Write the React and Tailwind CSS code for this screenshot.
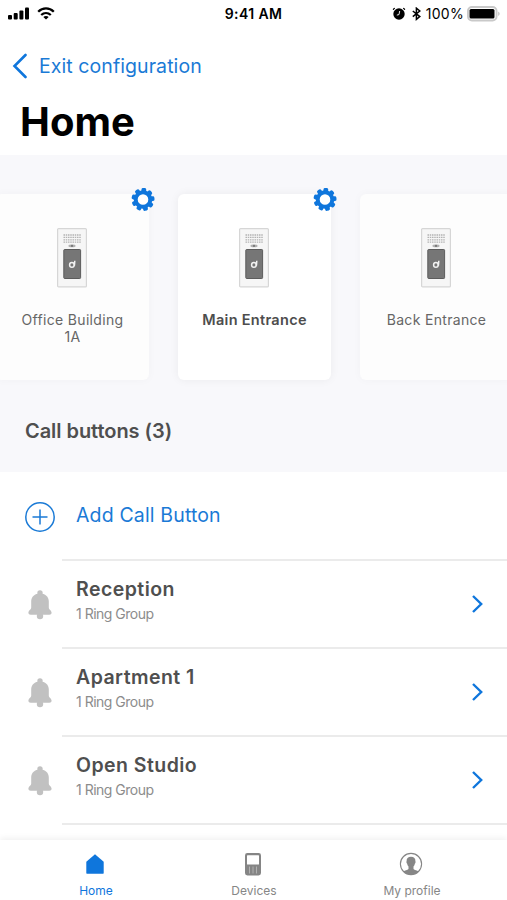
import React, { useState } from "react";

const stations = [
    { name: "Office Building 1A", gear: true },
    { name: "Main Entrance", gear: true, active: true },
    { name: "Back Entrance" },
];

const callButtons = [
    { name: "Reception", info: "1 Ring Group" },
    { name: "Apartment 1", info: "1 Ring Group" },
    { name: "Open Studio", info: "1 Ring Group" },
];

const toothAngles = [0, 40, 80, 120, 160, 200, 240, 280, 320];

const SignalIcon = () => (
    <svg width="22" height="14" viewBox="0 0 22 14">
        <rect x="0" y="8" width="4" height="4.5" rx="1" />
        <rect x="5.7" y="6" width="4" height="6.5" rx="1" />
        <rect x="11.4" y="3.5" width="4" height="9" rx="1" />
        <rect x="17" y="0.5" width="4" height="12" rx="1" />
    </svg>
);

const WifiIcon = () => (
    <svg width="18" height="14" viewBox="0 0 18 14" fill="none" stroke="black" strokeWidth="2.3">
        <path d="M1.2 4.7C5.6 0.3 12.4 0.3 16.8 4.7" />
        <path d="M4.2 8C7 5.4 11 5.4 13.8 8" />
        <path d="M9 12.6L6.3 9.9C7.8 8.6 10.2 8.6 11.7 9.9Z" fill="black" stroke="none" />
    </svg>
);

const AlarmIcon = () => (
    <svg width="14" height="14" viewBox="0 0 14 14" fill="none" stroke="black" strokeLinecap="round">
        <circle cx="7" cy="7" r="5.7" fill="black" stroke="none" />
        <path d="M1.4 2.3L2.4 1.4M12.6 2.3L11.6 1.4" strokeWidth="1.2" />
        <path d="M7.6 4.4L7 7.6L5.2 8" stroke="white" strokeWidth="0.9" />
    </svg>
);

const BluetoothIcon = () => (
    <svg width="9" height="14" viewBox="0 0 9 14" fill="none" stroke="black" strokeWidth="1.5">
        <path d="M0.8 4L7.8 9.6L4.4 12.4V1.2L7.8 4L0.8 9.6" />
    </svg>
);

const BatteryIcon = () => (
    <svg width="34" height="16" viewBox="0 0 34 16">
        <rect x="0.95" y="1" width="28.6" height="13.5" rx="4" fill="white" stroke="#c9c9c9" strokeWidth="1.9" />
        <rect x="2.5" y="3" width="25" height="9.5" rx="1.5" fill="black" />
        <path d="M31.3 5.5C33 6.3 33 9.2 31.3 10Z" fill="#b5b5b5" />
    </svg>
);

const GearIcon = () => (
    <svg width="24" height="24" viewBox="-12 -12.5 24 24">
        {toothAngles.map((angle) => (
            <rect
                key={angle}
                x="-2.4"
                y="-11.5"
                width="4.8"
                height="5"
                rx="1.6"
                fill="#0f76dc"
                transform={`rotate(${angle + 5})`}
            />
        ))}
        <circle r="7.3" fill="white" stroke="#0f76dc" strokeWidth="4" />
    </svg>
);

const DoorStation = () => (
    <svg width="31" height="60" viewBox="0 0 31 60">
        <rect x="0.6" y="0.6" width="28.8" height="58.3" rx="1" fill="#f6f6f6" stroke="#d6d6d6" strokeWidth="1.2" />
        {[7, 9.4, 11.8, 14.2].map((y) => (
            <path key={y} d={`M6.5 ${y}H24`} stroke="#b3b3b3" strokeWidth="1.3" strokeDasharray="1.5 0.75" />
        ))}
        <ellipse cx="15" cy="17.9" rx="3.6" ry="1.3" fill="#b0b0b0" />
        <circle cx="15" cy="17.9" r="1.1" fill="#777777" />
        <rect x="6.8" y="21.5" width="16.8" height="29" rx="0.8" fill="#767676" stroke="#5c5c5c" />
        <circle cx="14.9" cy="36.9" r="2.3" fill="none" stroke="#f2f2f2" strokeWidth="1.5" />
        <path d="M17.8 32.8L17.4 37.8" stroke="#f2f2f2" strokeWidth="1.5" />
    </svg>
);

const BellIcon = () => (
    <svg width="24" height="30" viewBox="0 0 24 30" fill="#c1c1c1">
        <circle cx="12" cy="3" r="2.7" />
        <circle cx="12" cy="26" r="3.2" />
        <path d="M12 3.4C6.8 3.4 3.2 6.7 3.2 11.2V17.5C3.2 19.8 0.4 20.2 0.4 22.8C0.4 24.1 1.3 24.8 2.7 24.8H21.3C22.7 24.8 23.6 24.1 23.6 22.8C23.6 20.2 20.8 19.8 20.8 17.5V11.2C20.8 6.7 17.2 3.4 12 3.4Z" />
    </svg>
);

const HomeIcon = () => (
    <svg width="24" height="24" viewBox="0 0 24 24">
        <path d="M12 2.3L20.7 9.8V21.1C20.7 21.5 20.5 21.7 20.1 21.7H3.9C3.5 21.7 3.3 21.5 3.3 21.1V9.8Z" fill="#0f76dc" />
    </svg>
);

const DevicesIcon = () => (
    <svg width="24" height="24" viewBox="0 0 24 24">
        <rect x="4" y="1" width="16" height="22.5" rx="2.4" fill="#858585" />
        <rect x="6" y="3.2" width="12" height="9.3" rx="0.5" fill="white" />
        <path d="M8.5 14.5V21.5M12 14.5V21.5M15.5 14.5V21.5" stroke="#b5b5b5" strokeWidth="0.9" />
    </svg>
);

const ProfileIcon = () => (
    <svg width="24" height="24" viewBox="0 0 24 24">
        <circle cx="12" cy="12" r="10.6" fill="white" stroke="#868686" strokeWidth="1.1" />
        <path
            d="M12 4.8C9 4.8 7.4 6.6 7.6 9.2C7.2 9.8 7.5 11.4 8.2 11.8C8.4 13.2 9 14 9.5 14.6V16.9C8.5 18.2 5.8 18.2 4.4 19.4C8.2 23.6 15.8 23.6 19.6 19.4C18.2 18.2 15.5 18.2 14.5 16.9V14.6C15 14 15.6 13.2 15.8 11.8C16.5 11.4 16.8 9.8 16.4 9.2C16.6 6.6 15 4.8 12 4.8Z"
            fill="#868686"
        />
    </svg>
);

const tabs = [
    { name: "Home", icon: HomeIcon },
    { name: "Devices", icon: DevicesIcon },
    { name: "My profile", icon: ProfileIcon },
];

const StatusBar = () => (
    <div className="flex h-[27px] items-center justify-between pl-2 pr-[6px]">
        <div className="flex w-[180px] items-center gap-[7px]">
            <SignalIcon />
            <WifiIcon />
        </div>
        <div className="pr-[2px] text-[14px] font-semibold leading-5 tracking-[0.4px]">9:41 AM</div>
        <div className="flex w-[180px] items-center justify-end">
            <AlarmIcon />
            <span className="ml-[6px]">
                <BluetoothIcon />
            </span>
            <span className="ml-[5px] mr-[3px] text-[14px] tracking-[0.3px]">100%</span>
            <BatteryIcon />
        </div>
    </div>
);

const StationCard = ({ station }) => (
    <button
        className={
            station.active
                ? "relative flex h-[186px] w-[153px] shrink-0 flex-col items-center rounded-md bg-white pt-[34px] shadow-[0_0_10px_rgba(0,0,0,0.06)]"
                : "relative flex h-[186px] w-[153px] shrink-0 flex-col items-center rounded-md bg-[#fdfdfd] pt-[34px] shadow-[0_0_10px_rgba(0,0,0,0.03)]"
        }>
        <DoorStation />
        <span
            className={
                station.active
                    ? "mt-[23px] w-[120px] text-[14.5px] font-semibold leading-[17px] tracking-[0.3px] text-[#4d4d4d]"
                    : "mt-[23px] w-[120px] text-[14px] leading-[17px] tracking-[0.32px] text-[#666666]"
            }>
            {station.name}
        </span>
        {station.gear && (
            <span className="absolute -right-[6px] -top-[7px]">
                <GearIcon />
            </span>
        )}
    </button>
);

const CallButtonRow = ({ item }) => (
    <div className="flex h-[88px]">
        <div className="flex w-[62px] shrink-0 items-center pl-7">
            <BellIcon />
        </div>
        <div className="flex flex-1 items-center justify-between border-b-2 border-[#ebebeb] pl-[14px] pr-[22px]">
            <div className="pb-[7px]">
                <div className="text-[19.5px] font-semibold leading-6 tracking-[0.45px] text-[#4f4f4f]">{item.name}</div>
                <div className="mt-[3px] text-[14px] leading-5 tracking-[-0.5px] text-[#8c8c8c]">{item.info}</div>
            </div>
            <svg width="14" height="20" viewBox="0 0 14 20" fill="none" stroke="#0f76dc" strokeWidth="2.4">
                <path d="M2 2L10.2 10L2 18" />
            </svg>
        </div>
    </div>
);

const App = () => {
    const [activeTab, setActiveTab] = useState("Home");

    return (
        <div className="flex h-[900px] w-[507px] flex-col overflow-hidden bg-white font-['Inter',sans-serif] text-black">
            <header className="h-[155px] shrink-0">
                <StatusBar />
                <button className="ml-3 mt-[24px] flex h-[30px] items-center gap-3 text-[#1a7ad6]">
                    <svg width="15" height="26" viewBox="0 0 15 26" fill="none" stroke="#0f76dc" strokeWidth="2.6">
                        <path d="M13.5 2L2.5 13L13.5 24" strokeLinecap="round" />
                    </svg>
                    <span className="pt-[2px] text-[19.5px] tracking-[0.08px]">Exit configuration</span>
                </button>
                <h1 className="ml-[20px] mt-[17px] text-[40px] font-bold leading-[48px]">Home</h1>
            </header>

            <section className="h-[317px] shrink-0 bg-[#f8f8fb] pt-[39px]">
                <div className="-ml-1 flex gap-[29px]">
                    {stations.map((station) => (
                        <StationCard key={station.name} station={station} />
                    ))}
                </div>
                <h2 className="ml-[25px] mt-[39px] text-[20px] font-semibold leading-6 tracking-[-0.05px] text-[#4f4f4f]">
                    Call buttons (3)
                </h2>
            </section>

            <main className="flex-1">
                <button className="flex h-[89px] w-full text-left">
                    <span className="flex w-[62px] shrink-0 items-center pl-[25px]">
                        <svg width="30" height="30" viewBox="0 0 30 30" fill="none" stroke="#1a7ad6" strokeWidth="1.5">
                            <circle cx="15" cy="15" r="14.2" />
                            <path d="M15 7.5V22.5M7.5 15H22.5" />
                        </svg>
                    </span>
                    <span className="flex flex-1 items-center border-b-2 border-[#ebebeb] pl-[14px] text-[19.5px] tracking-[0.15px] text-[#1a7ad6]">
                        Add Call Button
                    </span>
                </button>
                {callButtons.map((item) => (
                    <CallButtonRow key={item.name} item={item} />
                ))}
            </main>

            <nav className="z-10 flex h-[60px] shrink-0 justify-between bg-white pl-[17px] pr-4 shadow-[0_-2px_6px_rgba(0,0,0,0.06)]">
                {tabs.map(({ name, icon: Icon }) => (
                    <button
                        key={name}
                        onClick={() => setActiveTab(name)}
                        className={
                            activeTab === name
                                ? "flex w-[158px] flex-col items-center pt-3 text-[12px] text-[#0f76dc]"
                                : "flex w-[158px] flex-col items-center pt-3 text-[12px] text-[#868686]"
                        }>
                        <span className="mr-[3px]">
                            <Icon />
                        </span>
                        <span className="mt-[6px] leading-[18px]">{name}</span>
                    </button>
                ))}
            </nav>
        </div>
    );
};

export default App;
